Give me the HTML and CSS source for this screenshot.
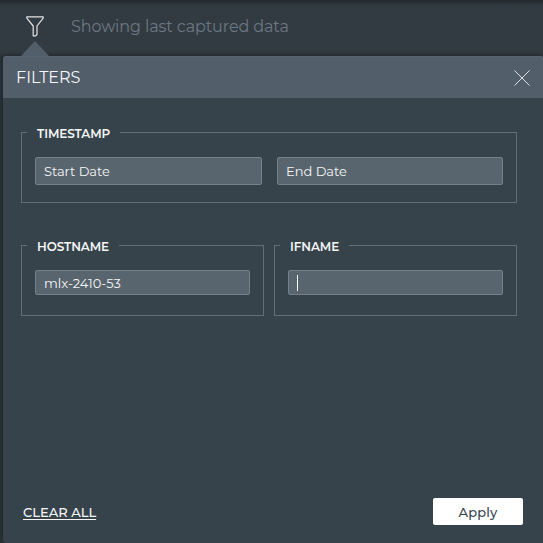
FILE: index.html
```html
<!DOCTYPE html>
<html lang="en">
<head>
<meta charset="utf-8">
<title>Filters</title>
<link rel="stylesheet" href="styles.css">
</head>
<body>
<header class="topbar">
  <svg class="funnel" width="18" height="21" viewBox="0 0 18 21"><path d="M.8.8h16.400v1.400L11 10v8.400L9.800 19.800H7.200V10L.8 2.200Z"/></svg>
  <span class="status">Showing last captured data</span>
</header>
<main class="panel">
  <div class="pointer"></div>
  <div class="panel-head">
    <h1 class="title">FILTERS</h1>
    <svg class="close" width="16" height="16" viewBox="0 0 16 16"><path d="M.5.5l15 15M15.500.5l-15 15"/></svg>
  </div>
  <form class="filters">
    <fieldset class="group wide">
      <legend class="legend l-time">TIMESTAMP</legend>
      <div class="dates">
        <div class="field date">Start Date</div>
        <div class="field date">End Date</div>
      </div>
    </fieldset>
    <fieldset class="group">
      <legend class="legend l-host">HOSTNAME</legend>
      <div class="field">mlx-2410-53</div>
    </fieldset>
    <fieldset class="group">
      <legend class="legend l-if">IFNAME</legend>
      <div class="field"><span class="caret"></span></div>
    </fieldset>
  </form>
  <footer class="actions">
    <a class="clear">CLEAR ALL</a>
    <div class="apply">Apply</div>
  </footer>
</main>
</body>
</html>
```
FILE: styles.css
```css
* { box-sizing: border-box; }
body {
  margin: 0;
  width: 543px;
  height: 543px;
  overflow: hidden;
  display: flex;
  flex-direction: column;
  background: #2a3137;
  font-family: Montserrat, Inter, sans-serif;
  color: #f4f6f7;
}
.topbar {
  height: 56px;
  flex: none;
  display: flex;
  align-items: flex-start;
  padding: 16px 0 0 26px;
  background: linear-gradient(#24292e 0, #293036 3px, #333b42 6px, #333b42 52px, #2d353a 56px);
}
.funnel { fill: none; stroke: #e4e5e5; stroke-width: 1.2; stroke-linejoin: round; }
.status {
  margin: 1px 0 0 27px;
  font-size: 16px;
  line-height: 20px;
  letter-spacing: -.1px;
  font-weight: 400;
  color: #6c7783;
  white-space: nowrap;
}
.panel {
  position: relative;
  flex: 1;
  margin-left: 3px;
  display: flex;
  flex-direction: column;
  background: #37434b;
  border-radius: 3px 3px 0 3px;
  box-shadow: 0 0 4px #1d2328;
}
.pointer {
  position: absolute;
  left: 18px;
  top: -15px;
  border: solid transparent;
  border-width: 0 14px 15px;
  border-bottom-color: #525e69;
}
.panel-head {
  height: 42px;
  display: flex;
  align-items: center;
  justify-content: space-between;
  padding: 0 13px;
  background: #525e69;
  border-top: 1px solid #586570;
  border-radius: 3px 2px 0 0;
}
.title { margin: 0; font-size: 16px; line-height: 20px; font-weight: 400; }
.close { margin-top: 1px; fill: none; stroke: #dce1e4; stroke-width: 1; }
.filters {
  display: grid;
  grid-template-columns: 243px 243px;
  gap: 34px 10px;
  padding: 26px 0 0 18px;
}
.group {
  min-width: 0;
  height: 79px;
  margin: 0;
  padding: 16px 13px 0;
  border: 1px solid #5f6e77;
}
.wide { grid-column: span 2; }
.legend {
  height: 17px;
  margin-left: -8px;
  padding: 0 0 0 10px;
  font-size: 12px;
  line-height: 19px;
  font-weight: 600;
  letter-spacing: -.08px;
  white-space: nowrap;
}
.l-time { width: 93px; }
.l-host { width: 92px; }
.l-if { width: 69px; }
.dates { display: grid; grid-template-columns: 227px 226px; gap: 15px; }
.field {
  height: 25px;
  display: flex;
  align-items: center;
  padding-left: 8px;
  border: 1px solid #75808a;
  border-radius: 2px;
  background: #59656e;
  font-size: 13px;
  line-height: 18px;
  letter-spacing: -.02px;
}
.date { height: 28px; }
.caret { width: 1px; height: 16px; background: #fff; }
.actions {
  margin-top: auto;
  display: flex;
  justify-content: space-between;
  align-items: center;
  padding: 0 20px 18px;
}
.clear {
  font-size: 13px;
  line-height: 18px;
  font-weight: 500;
  text-decoration: underline;
  text-underline-offset: 2px;
}
.apply {
  width: 90px;
  height: 27px;
  display: flex;
  align-items: center;
  justify-content: center;
  padding-top: 1px;
  border-radius: 2px;
  background: #fff;
  color: #37434b;
  font-size: 13px;
  font-weight: 500;
  letter-spacing: .2px;
}
```
